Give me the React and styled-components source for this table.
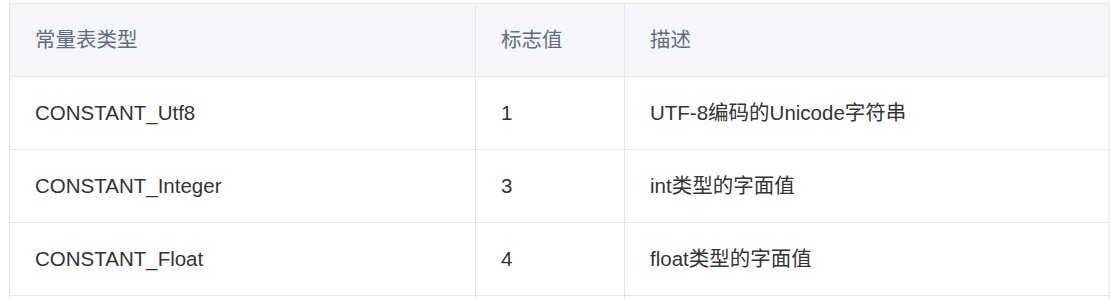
import React from 'react';
import styled, { createGlobalStyle } from 'styled-components';

const GlobalStyle = createGlobalStyle`
  html, body {
    margin: 0;
    padding: 0;
    background: #fff;
    overflow: hidden;
  }
  body {
    font-family: "Liberation Sans", Arial, "Noto Sans CJK SC", sans-serif;
  }
`;

const Wrapper = styled.div`
  padding: 3px 0 0 9px;
`;

const Table = styled.table`
  width: 1101px;
  border-collapse: collapse;
  table-layout: fixed;
  font-size: 20.5px;
  line-height: 24px;
`;

const HeadCell = styled.th`
  background-color: #f4f6fa;
  color: #5f6d80;
  font-weight: normal;
  text-align: left;
  padding: 24px 25px;
  border: 1px solid #e2e5ee;
`;

const Cell = styled.td`
  color: #333;
  padding: 24px 25px;
  border: 1px solid #e2e5ee;
`;

const rows = [
  { type: 'CONSTANT_Utf8', tag: 1, desc: 'UTF-8编码的Unicode字符串' },
  { type: 'CONSTANT_Integer', tag: 3, desc: 'int类型的字面值' },
  { type: 'CONSTANT_Float', tag: 4, desc: 'float类型的字面值' },
  // the next row is scrolled out of view, only its top edge shows
  { type: '', tag: '', desc: '' },
];

const App = () => {
  return (
    <>
      <GlobalStyle />
      <Wrapper>
        <Table>
          <colgroup>
            <col style={{ width: 466 }} />
            <col style={{ width: 149 }} />
            <col />
          </colgroup>
          <thead>
            <tr>
              <HeadCell>常量表类型</HeadCell>
              <HeadCell>标志值</HeadCell>
              <HeadCell>描述</HeadCell>
            </tr>
          </thead>
          <tbody>
            {rows.map((row, i) => (
              <tr key={i}>
                <Cell>{row.type}</Cell>
                <Cell>{row.tag}</Cell>
                <Cell>{row.desc}</Cell>
              </tr>
            ))}
          </tbody>
        </Table>
      </Wrapper>
    </>
  );
};

export default App;
